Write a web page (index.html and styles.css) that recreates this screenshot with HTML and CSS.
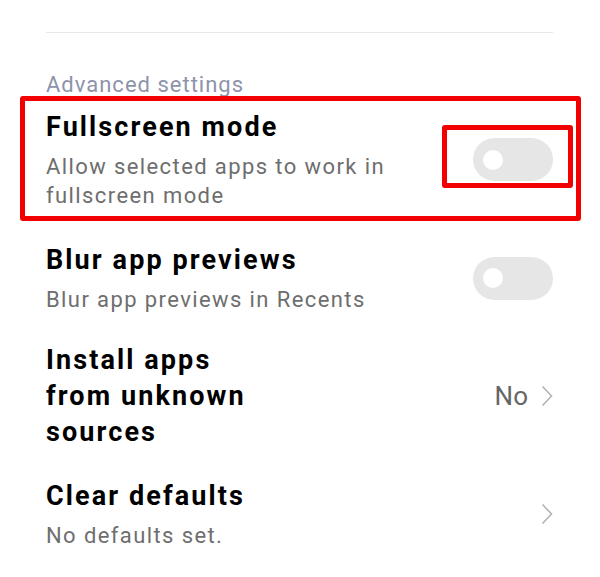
FILE: index.html
```html
<!DOCTYPE html>
<html lang="en">
<head>
    <meta charset="UTF-8">
    <meta name="viewport" content="width=device-width, initial-scale=1.0">
    <title>App settings</title>
    <link rel="stylesheet" href="styles.css">
</head>
<body>
    <div class="settings">
        <hr class="divider">

        <div class="section-title">Advanced settings</div>

        <div class="row highlighted">
            <div class="row-text">
                <div class="row-title">Fullscreen mode</div>
                <div class="row-summary">Allow selected apps to work in fullscreen mode</div>
            </div>
            <div class="toggle marked">
                <span class="knob"></span>
            </div>
        </div>

        <div class="row">
            <div class="row-text">
                <div class="row-title">Blur app previews</div>
                <div class="row-summary">Blur app previews in Recents</div>
            </div>
            <div class="toggle">
                <span class="knob"></span>
            </div>
        </div>

        <div class="row">
            <div class="row-text narrow">
                <div class="row-title">Install apps from unknown sources</div>
            </div>
            <div class="row-value">
                <span>No</span>
                <svg class="chevron" width="12" height="22" viewBox="0 0 12 22">
                    <polyline points="1.5,1.5 10.5,11 1.5,20.5" fill="none" stroke="#b3b3b3" stroke-width="1.6"/>
                </svg>
            </div>
        </div>

        <div class="row">
            <div class="row-text">
                <div class="row-title">Clear defaults</div>
                <div class="row-summary">No defaults set.</div>
            </div>
            <div class="row-value">
                <svg class="chevron" width="12" height="22" viewBox="0 0 12 22">
                    <polyline points="1.5,1.5 10.5,11 1.5,20.5" fill="none" stroke="#b3b3b3" stroke-width="1.6"/>
                </svg>
            </div>
        </div>
    </div>
</body>
</html>
```

FILE: styles.css
```css
body {
    font-family: Roboto, "Noto Sans", sans-serif;
    background-color: #ffffff;
    margin: 0;
    padding: 0;
}

.settings {
    padding: 0 47px 0 46px;
}

.divider {
    margin: 0;
    margin-top: 32px;
    border: none;
    border-top: 1px solid #e8e8ea;
}

.section-title {
    margin-top: 42px;
    font-size: 22px;
    line-height: 20px;
    letter-spacing: 1px;
    color: #8d93ab;
}

.row {
    display: flex;
    align-items: center;
    justify-content: space-between;
    padding: 14px 0;
    position: relative;
}

.row.highlighted {
    padding-bottom: 18px;
}

.row-text {
    flex: 1;
    max-width: 380px;
}

.row-text.narrow {
    max-width: 220px;
}

.row-title {
    font-size: 27px;
    line-height: 36px;
    font-weight: bold;
    letter-spacing: 2.1px;
    color: #000;
}

.row-summary {
    margin-top: 7px;
    font-size: 22px;
    line-height: 29px;
    letter-spacing: 1.4px;
    color: #6e6e6e;
}

.toggle {
    width: 80px;
    height: 43px;
    border-radius: 22px;
    background-color: #e6e6e6;
    display: flex;
    align-items: center;
    padding-left: 10px;
    box-sizing: border-box;
    position: relative;
}

.knob {
    width: 20px;
    height: 20px;
    border-radius: 50%;
    background-color: #ffffff;
}

.row-value {
    display: flex;
    align-items: center;
    gap: 13px;
    font-size: 26px;
    color: #666;
}

.chevron {
    display: block;
}

/* red annotation boxes drawn over the screenshot */
.highlighted::before {
    content: "";
    position: absolute;
    left: -26px;
    right: -28px;
    top: 1px;
    bottom: 7px;
    border: 5px solid #f20000;
    border-radius: 3px;
}

.marked::after {
    content: "";
    position: absolute;
    left: -31px;
    right: -20px;
    top: -13px;
    bottom: -7px;
    border: 5px solid #f20000;
    border-radius: 3px;
}
```
